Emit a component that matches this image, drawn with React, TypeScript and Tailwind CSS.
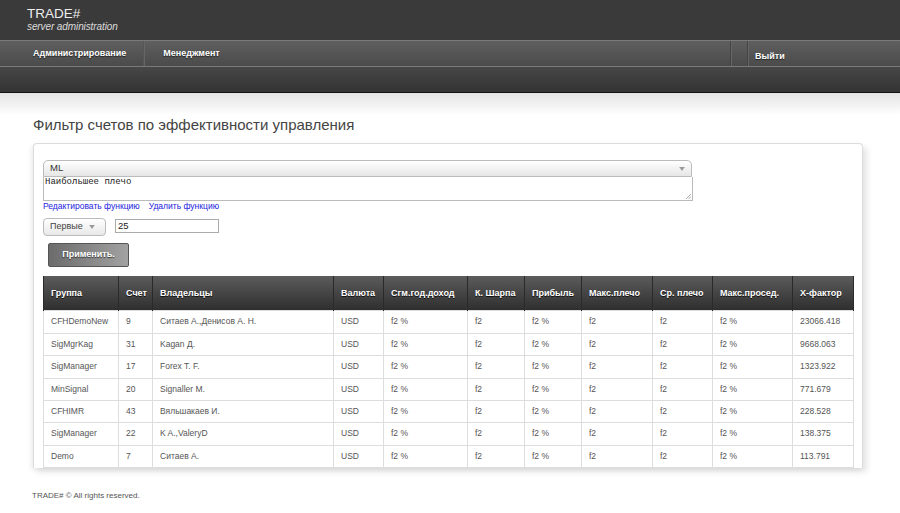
import React from "react";

const COLS = [
  { label: "Группа", w: "w-[75px]" },
  { label: "Счет", w: "w-[34px]" },
  { label: "Владельцы", w: "w-[181px]" },
  { label: "Валюта", w: "w-[50px]" },
  { label: "Сгм.год.доход", w: "w-[84px]" },
  { label: "К. Шарпа", w: "w-[57px]" },
  { label: "Прибыль", w: "w-[57px]" },
  { label: "Макс.плечо", w: "w-[71px]" },
  { label: "Ср. плечо", w: "w-[60px]" },
  { label: "Макс.просед.", w: "w-[80px]" },
  { label: "X-фактор", w: "w-[61px]" },
];

const ROWS = [
  ["CFHDemoNew", "9", "Ситаев А.,Денисов А. Н.", "23066.418"],
  ["SigMgrKag", "31", "Kagan Д.", "9668.063"],
  ["SigManager", "17", "Forex T. F.", "1323.922"],
  ["MinSignal", "20", "Signaller M.", "771.679"],
  ["CFHIMR", "43", "Вяльшакаев И.", "228.528"],
  ["SigManager", "22", "K A.,ValeryD", "138.375"],
  ["Demo", "7", "Ситаев А.", "113.791"],
];

const ROW_H = ["h-[23px]", "h-[22px]", "h-[23px]", "h-[22px]", "h-[22px]", "h-[23px]", "h-[22px]"];

function Arrow({ small }: { small?: boolean }) {
  return (
    <svg width={small ? 6 : 7} height={small ? 4 : 5} viewBox="0 0 7 5" className="shrink-0">
      <path d="M0 0 L7 0 L3.5 5 Z" fill="#999" />
    </svg>
  );
}

export default function App() {
  return (
    <div className="w-[900px] min-h-[513px] bg-white font-['Liberation_Sans',Arial,sans-serif]">
      {/* header */}
      <div className="h-[40px] bg-[#3a3a3a] pl-[27px] pt-[7px]">
        <div className="text-[13.5px] leading-[14px] text-[#eeeeee]">TRADE#</div>
        <div className="text-[10px] leading-[11px] italic text-[#dddddd] tracking-[-0.1px]">
          server administration
        </div>
      </div>

      {/* nav */}
      <div className="h-[27px] border-t border-[#7a7a7a] border-b border-b-[#7a7a7a] bg-gradient-to-b from-[#5f5f5f] to-[#4b4b4b] flex items-stretch text-[9px] font-bold text-white [text-shadow:0_1px_1px_#222]">
        <div className="pl-[33px] pr-[17px] flex items-center border-r border-[#555] shadow-[1px_0_0_#666]">
          Администрирование
        </div>
        <div className="pl-[19px] flex items-center">Менеджмент</div>
        <div className="flex-1" />
        <div className="w-[17px] border-l border-[#444] shadow-[inset_1px_0_0_#666]" />
        <div className="border-l border-[#444] shadow-[inset_1px_0_0_#666] pl-[7px] w-[153px] flex items-center pt-[6px]">
          Выйти
        </div>
      </div>
      <div className="h-[26px] bg-gradient-to-b from-[#474747] to-[#333333] border-b border-[#111]" />
      <div className="h-[22px] bg-gradient-to-b from-[#e3e3e3] to-white" />

      {/* content */}
      <div className="px-[33px]">
        <h1 className="text-[15px] leading-[18px] text-[#444] mt-[1px]">
          Фильтр счетов по эффективности управления
        </h1>

        <div className="mt-[9px] w-[830px] h-[325px] border border-b-0 border-[#dcdcdc] rounded-t-[4px] shadow-[4px_4px_6px_rgba(0,0,0,0.1),-2px_2px_5px_rgba(0,0,0,0.07)] pl-[9px] pt-[16px]">
          <div className="w-[649px] h-[17px] border border-[#bbbbbb] rounded-t-[5px] bg-gradient-to-b from-white to-[#e6e6e6] flex items-center justify-between pl-[6px] pr-[6px] text-[9.5px] text-[#333]">
            <span>ML</span>
            <Arrow small />
          </div>
          <div className="relative w-[650px] h-[24px] border border-[#bbbbbb] border-t-0 text-[9px] leading-[11px] text-[#222] font-['Liberation_Mono',monospace] px-[1px]">
            Наибольшее плечо
            <svg width="6" height="6" viewBox="0 0 6 6" className="absolute right-[1px] bottom-[1px]">
              <path d="M1 6 L6 1 M3.5 6 L6 3.5" stroke="#999" strokeWidth="0.8" />
            </svg>
          </div>
          <div className="text-[8.5px] leading-[11px] text-[#2222dd] flex gap-[9px]">
            <span>Редактировать функцию</span>
            <span>Удалить функцию</span>
          </div>

          <div className="mt-[6px] flex items-center gap-[9px]">
            <div className="w-[63px] h-[18px] border border-[#bbbbbb] rounded-[4px] bg-gradient-to-b from-white to-[#e8e8e8] flex items-center justify-between pl-[6px] pr-[10px] text-[9px] text-[#444]">
              <span>Первые</span>
              <Arrow small />
            </div>
            <div className="w-[104px] h-[14px] border border-[#aaaaaa] text-[9.5px] leading-[12px] text-[#222] pl-[2px] -mt-[3px]">
              25
            </div>
          </div>

          <div className="mt-[7px] ml-[5px] w-[81px] h-[24px] border border-[#555] rounded-[2px] bg-gradient-to-r from-[#6c6c6c] to-[#a2a2a2] flex items-center justify-center text-[9px] font-bold text-white [text-shadow:0_1px_1px_#333]">
            Применить.
          </div>

          <table className="mt-[9px] w-[810px] border-collapse table-fixed text-[8.5px]">
            <thead>
              <tr className="h-[34px] bg-gradient-to-b from-[#5c5c5c] to-[#2f2f2f]">
                {COLS.map((c) => (
                  <th
                    key={c.label}
                    className={`${c.w} border-x border-[#2a2a2a] text-left pl-[7px] pt-[2px] text-[9px] font-bold text-white whitespace-nowrap [text-shadow:0_1px_0_#111]`}
                  >
                    {c.label}
                  </th>
                ))}
              </tr>
            </thead>
            <tbody className="text-[#555]">
              {ROWS.map((r, i) => (
                <tr key={i} className={ROW_H[i]}>
                  {[r[0], r[1], r[2], "USD", "f2 %", "f2", "f2 %", "f2", "f2", "f2 %", r[3]].map((v, j) => (
                    <td key={j} className="border border-[#dddddd] pl-[7px] whitespace-nowrap">
                      {v}
                    </td>
                  ))}
                </tr>
              ))}
            </tbody>
          </table>
        </div>

        <div className="mt-[22px] -ml-[1px] text-[8px] text-[#555]">TRADE# © All rights reserved.</div>
      </div>
    </div>
  );
}
